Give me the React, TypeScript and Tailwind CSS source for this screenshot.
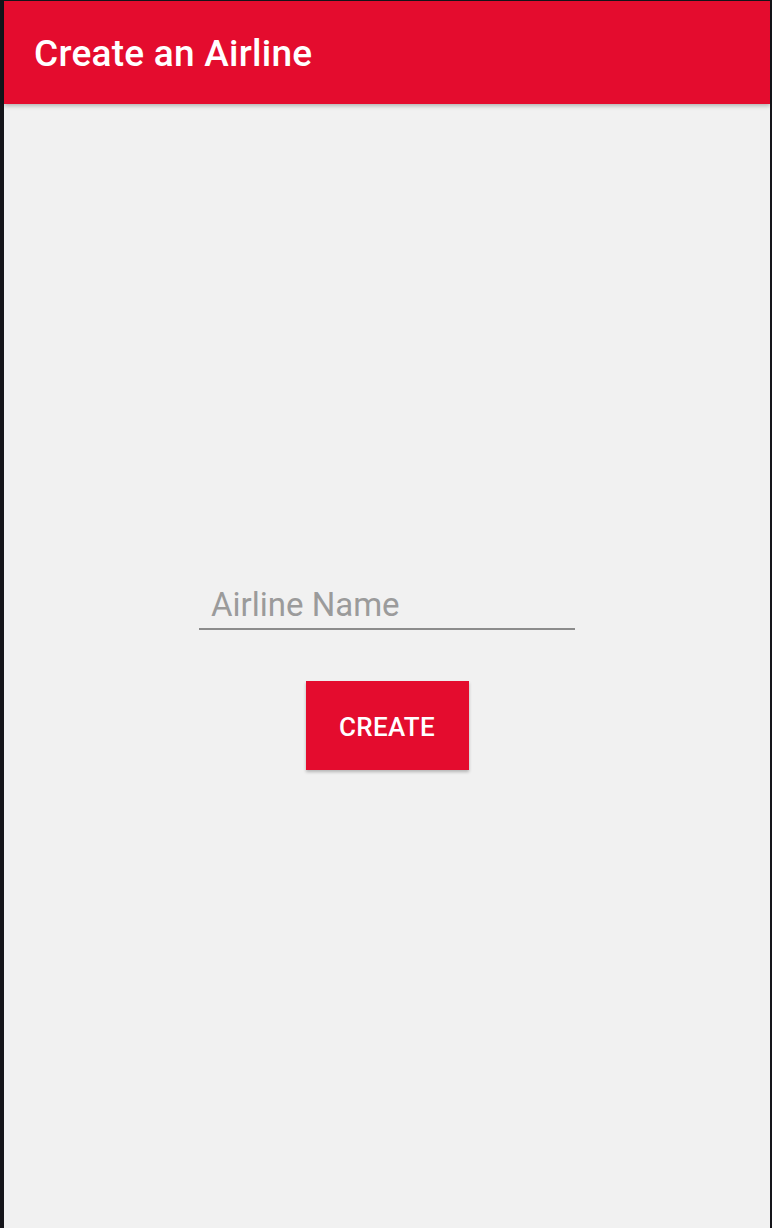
export default function App() {
  return (
    <div
      className="flex h-[1228px] w-full flex-col bg-[#15151a] pl-[4px] pr-[2px] pt-[1px]"
      style={{ fontFamily: "Roboto, 'Liberation Sans', sans-serif" }}
    >
      {/* App bar */}
      <header className="relative z-10 flex h-[103px] shrink-0 items-center bg-[#e40c2e] pl-[30px] shadow-[0_2px_4px_rgba(0,0,0,0.25)]">
        <h1 className="pt-[2px] text-[37px] font-medium leading-none tracking-[0.25px] text-white">
          Create an Airline
        </h1>
      </header>

      {/* Form */}
      <main className="flex flex-1 flex-col items-center bg-[#f1f1f1] pt-[482px]">
        <div className="w-[376px] border-b-2 border-[#8c8c8c]">
          <input
            type="text"
            placeholder="Airline Name"
            className="h-[42px] w-full bg-transparent px-[12px] pb-[5px] text-[33px] leading-none text-[#333] outline-none placeholder:text-[#9b9b9b]"
          />
        </div>
        <button className="mt-[51px] h-[89px] w-[163px] bg-[#e40c2e] pt-[4px] text-[26px] font-medium uppercase tracking-[0.3px] text-white shadow-[0_2px_3px_rgba(0,0,0,0.25)]">
          Create
        </button>
      </main>
    </div>
  );
}
